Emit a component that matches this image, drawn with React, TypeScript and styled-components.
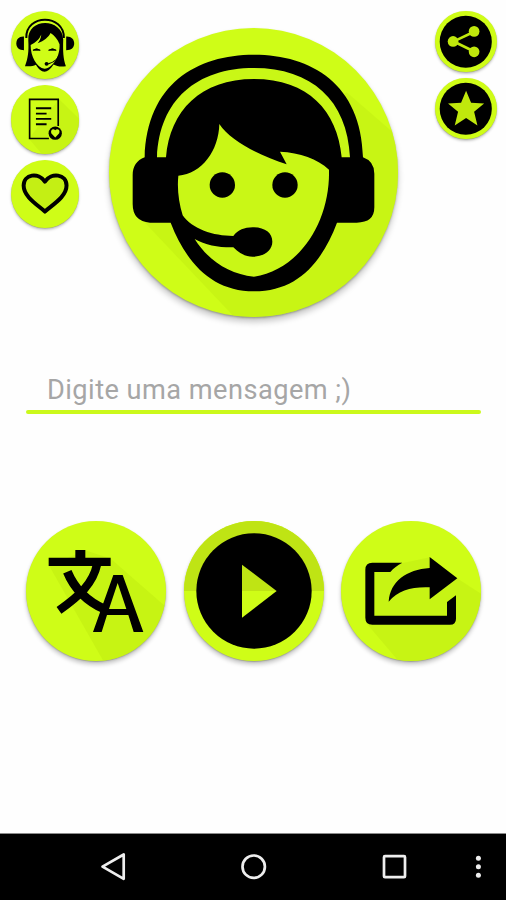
import React from "react";
import styled, { createGlobalStyle } from "styled-components";

const LIME = "#cffd17";
const SHADE = "#c3f012";

const GlobalStyle = createGlobalStyle`
  *, *::before, *::after { box-sizing: border-box; }
  body { margin: 0; background: #fefefe; font-family: Roboto, sans-serif; }
`;

const Screen = styled.div`
  display: flex;
  flex-direction: column;
  width: 506px;
  height: 900px;
  overflow: hidden;
  background: #fefefe;
`;

const TopArea = styled.header`
  display: flex;
  justify-content: space-between;
  align-items: flex-start;
  height: 366px;
  padding: 10.5px 9.5px 0 10.7px;
`;

const ActionColumn = styled.div<{ $gap: number }>`
  display: flex;
  flex-direction: column;
  gap: ${(p) => p.$gap}px;
`;

const RoundButton = styled.button<{ $size: number; $depth: number }>`
  display: block;
  flex: none;
  width: ${(p) => p.$size}px;
  height: ${(p) => p.$size}px;
  padding: 0;
  border: 0;
  border-radius: 50%;
  background: ${LIME};
  cursor: pointer;
  box-shadow:
    0 ${(p) => p.$depth * 0.25}px ${(p) => p.$depth * 0.4}px rgba(40, 50, 0, 0.3),
    0 ${(p) => p.$depth}px ${(p) => p.$depth * 1.3}px rgba(0, 0, 0, 0.22);

  svg {
    display: block;
    width: 100%;
    height: 100%;
    border-radius: 50%;
  }
`;

const Hero = styled.div`
  margin: 17px 7px 0 0;
  flex: none;
`;

const MessageForm = styled.div`
  margin: 0 25.5px 0 26px;
  height: 47.5px;
  display: flex;
  flex-direction: column;
  justify-content: flex-end;
`;

const MessageInput = styled.input`
  height: 40px;
  padding: 0 21px;
  border: 0;
  outline: 0;
  background: transparent;
  color: #333;
  font: 400 27.2px/36px Roboto, sans-serif;
  letter-spacing: 0.46px;

  &::placeholder { color: #a6a6a6; opacity: 1; }
`;

const Underline = styled.div`
  height: 4px;
  border-radius: 2px;
  background: #cbf91b;
`;

const MainActions = styled.main`
  display: flex;
  justify-content: space-between;
  margin: 107.5px 25px 0 26px;
`;

const NavBar = styled.nav`
  display: flex;
  align-items: center;
  height: 67px;
  margin-top: auto;
  padding: 0 20px 0 99px;
  border-top: 1px solid #8b8b8b;
  background: #000;
`;

const NavIcon = styled.svg<{ $before: number; $width: number }>`
  display: block;
  flex: none;
  width: ${(p) => p.$width}px;
  height: 30px;
  margin-left: ${(p) => p.$before}px;
  overflow: visible;
  fill: none;
  stroke: #eee;
  stroke-width: 2.7;
  stroke-linejoin: round;
`;

const OperatorIcon = () => (
  <svg viewBox="27 22 867 867">
    <path d="M740 215L1000 440L700 950L480 970L125 596Z" fill={SHADE} opacity=".6" />
    <path d="M134 410C140 190 290 102 462 102C634 102 784 190 789 410Q823 422 823 459V560Q823 606 770 606H711C664 730 590 812 462 812C338 812 260 730 212 606H150Q98 602 98 550V463Q98 424 134 410Z" />
    <path d="M171 410C178 238 290 142 462 142C634 142 742 238 750 410H725C712 270 624 175 462 175C302 175 210 270 198 410Z" fill="#c9f716" />
    <path d="M358 310C392 362 480 405 560 431L540 393C600 396 652 414 687 447C691 600 602 746 462 768C385 760 324 718 284 655C316 674 360 681 400 680C420 700 438 708 458 708C494 708 517 687 517 663C517 636 494 620 458 620C433 620 414 628 400 646C340 646 276 625 248 584C236 545 231 503 235 465C306 459 356 390 358 310Z" fill="#c9f716" />
    <circle cx="367" cy="493" r="38" />
    <circle cx="555" cy="493" r="38" />
  </svg>
);

const WomanIcon = () => (
  <svg viewBox="32 31 206 206">
    <path d="M78 112C76 39 192 39 191 112" fill="none" stroke="#000" strokeWidth="6" />
    <path d="M71 108C56 107 48 116 48 129C48 142 57 149 71 149Z" />
    <path d="M198 108C213 107 222 116 222 129C222 142 213 149 198 149Z" />
    <path d="M84 119C80 50 187 51 189 117C188 154 189 174 197 197C182 200 169 197 160 192C150 207 141 214 133 214C123 214 114 205 107 193C98 198 85 198 74 197C83 174 86 153 84 119Z" />
    <path d="M151 97C162 104 173 116 178 131C180 168 158 201 133 205C109 201 91 168 91 133C106 127 118 115 123 102C122 114 118 121 112 128C132 120 145 109 151 97Z" fill={LIME} />
    <path d="M98 149Q109 140 120 149ZM145 149Q157 140 168 149Z" stroke="#000" strokeWidth="2.5" />
    <path d="M182 149Q177 181 144 190" fill="none" stroke="#000" strokeWidth="3.5" />
    <circle cx="139" cy="190" r="6" />
  </svg>
);

const DocumentIcon = () => (
  <svg viewBox="32 15 206 206">
    <path d="M176 57L260 140L220 240H140L86 177Z" fill={SHADE} opacity=".65" />
    <path d="M146 176H88V58H174V138" fill="none" stroke="#000" strokeWidth="5" />
    <path d="M107 85H153M107 101H139M107 117H153M107 133H139" stroke="#000" strokeWidth="5.5" />
    <circle cx="165" cy="160" r="20" />
    <path d="M165 173L153 160C150 148 160 145 165 151C171 145 181 150 177 160Z" fill={LIME} />
  </svg>
);

const HeartIcon = () => (
  <svg viewBox="32 240 206 206">
    <path
      d="M134 395C112 375 70 351 70 317C70 282 115 276 134 305C153 276 199 282 199 317C199 351 156 375 134 395Z"
      fill="#c4ef14"
      stroke="#000"
      strokeWidth="12"
      strokeLinejoin="round"
    />
  </svg>
);

const ShareNodesIcon = () => (
  <svg viewBox="30 32 184 184">
    <circle cx="122" cy="124" r="78" />
    <g fill="#c0e80c">
      <path d="M147 94L86 123L147 153" fill="none" stroke="#c0e80c" strokeWidth="8" />
      <circle cx="147" cy="93" r="16" />
      <circle cx="84" cy="123" r="16" />
      <circle cx="147" cy="154" r="16" />
    </g>
  </svg>
);

const StarIcon = () => (
  <svg viewBox="30 234 184 184">
    <circle cx="122" cy="326" r="78" />
    <path d="M123 272L138 308L177 310L147 335L157 376L123 354L89 376L99 335L69 310L108 308Z" fill="#c0e80c" />
  </svg>
);

const TranslateIcon = () => (
  <svg viewBox="18 33 420 420">
    <path d="M272 146L460 310L380 470H260L88 168L195 121Z" fill={SHADE} opacity=".7" />
    <path d="M86 143H166V120H196V143H272V168H86Z" />
    <g fill="none" stroke="#000">
      <path d="M231 164C219 219 181 256 117 301" strokeWidth="25" />
      <path d="M142 185C164 238 204 275 253 297" strokeWidth="27" />
    </g>
    <path d="M280 195H308L370 366H341L325 315H261L245 366H219ZM293 219L267 297H319Z" fillRule="evenodd" />
  </svg>
);

const PlayIcon = () => (
  <svg viewBox="26 33 420 420">
    <path d="M26 33H446V243H26Z" fill="#bfe414" />
    <circle cx="236" cy="243" r="173" />
    <path d="M200 164L304 243H200Z" fill="#bfe414" />
    <path d="M200 323L304 243H200Z" fill={LIME} />
  </svg>
);

const ExportIcon = () => (
  <svg viewBox="18 33 420 420">
    <path d="M366 205L460 265L400 470H205L93 338V180L200 160L285 142Z" fill={SHADE} opacity=".65" />
    <path d="M202 158C187 166 176 174 166 186H118V317H336V276L363 256V326Q363 344 345 344H112Q91 344 91 323V179Q91 158 112 158Z" />
    <path d="M284 141L367 205L284 268V232C230 230 190 240 161 275C165 214 215 179 284 174Z" />
  </svg>
);

export default function App() {
  return (
    <>
      <GlobalStyle />
      <Screen>
        <TopArea>
          <ActionColumn $gap={6.2}>
            <RoundButton $size={68.5} $depth={2} aria-label="Voz"><WomanIcon /></RoundButton>
            <RoundButton $size={68.5} $depth={2} aria-label="Mensagens"><DocumentIcon /></RoundButton>
            <RoundButton $size={68.5} $depth={2} aria-label="Favoritos"><HeartIcon /></RoundButton>
          </ActionColumn>
          <Hero>
            <RoundButton as="div" $size={289} $depth={5}><OperatorIcon /></RoundButton>
          </Hero>
          <ActionColumn $gap={5.9}>
            <RoundButton $size={61.5} $depth={2} aria-label="Compartilhar"><ShareNodesIcon /></RoundButton>
            <RoundButton $size={61.5} $depth={2} aria-label="Avaliar"><StarIcon /></RoundButton>
          </ActionColumn>
        </TopArea>

        <MessageForm>
          <MessageInput placeholder="Digite uma mensagem ;)" />
          <Underline />
        </MessageForm>

        <MainActions>
          <RoundButton $size={140} $depth={3.5} aria-label="Traduzir"><TranslateIcon /></RoundButton>
          <RoundButton $size={140} $depth={3.5} aria-label="Reproduzir"><PlayIcon /></RoundButton>
          <RoundButton $size={140} $depth={3.5} aria-label="Exportar"><ExportIcon /></RoundButton>
        </MainActions>

        <NavBar>
          <NavIcon $before={0} $width={30} viewBox="99 852 30 30">
            <path d="M102.5 866.7L123.7 854.5V878.8Z" />
          </NavIcon>
          <NavIcon $before={110} $width={30} viewBox="239 852 30 30">
            <circle cx="253.7" cy="866.7" r="11.2" />
          </NavIcon>
          <NavIcon $before={111} $width={30} viewBox="380 852 30 30">
            <rect x="384" y="856.2" width="21" height="21" rx="1" />
          </NavIcon>
          <NavIcon $before={64} $width={10} viewBox="474 852 10 30">
            <g fill="#eee" stroke="none">
              <circle cx="478.4" cy="858.2" r="2.5" />
              <circle cx="478.4" cy="866.8" r="2.5" />
              <circle cx="478.4" cy="875.3" r="2.5" />
            </g>
          </NavIcon>
        </NavBar>
      </Screen>
    </>
  );
}
